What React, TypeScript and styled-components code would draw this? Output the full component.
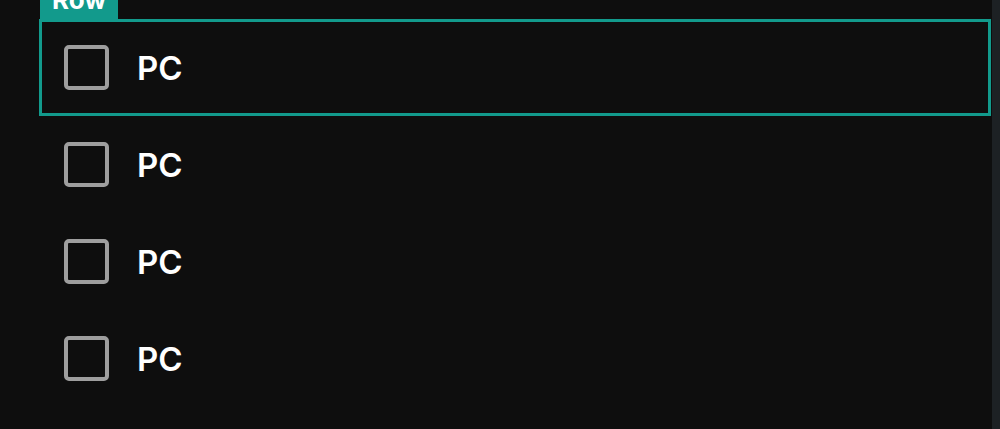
import styled, { createGlobalStyle } from 'styled-components';

const GlobalStyle = createGlobalStyle`
  html, body {
    margin: 0;
    padding: 0;
    background: #0e0e0e;
    overflow: hidden;
  }
`;

const Page = styled.div`
  display: flex;
  height: 429px;
  font-family: Inter, Roboto, 'Liberation Sans', sans-serif;
`;

const Main = styled.div`
  flex: 1;
  padding: 19px 1px 0 39px;
`;

const Track = styled.div`
  width: 8px;
  background: #1d2124;
`;

const List = styled.div`
  display: flex;
  flex-direction: column;
`;

const Row = styled.div<{ $selected?: boolean }>`
  position: relative;
  box-sizing: border-box;
  height: 97px;
  display: flex;
  align-items: center;
  gap: 28px;
  padding-left: 22px;
  border: 3px solid ${({ $selected }) => ($selected ? '#129a8c' : 'transparent')};
`;

const Tag = styled.div`
  position: absolute;
  left: -2px;
  bottom: 100%;
  box-sizing: border-box;
  width: 78px;
  height: 44px;
  padding: 0 0 9px 12px;
  display: flex;
  align-items: flex-end;
  background: #129a8c;
  color: #ffffff;
  font-size: 26px;
  line-height: 1;
  font-weight: 700;
`;

const Box = styled.div`
  box-sizing: border-box;
  width: 45px;
  height: 45px;
  border: 4px solid #9e9e9e;
  border-radius: 5px;
`;

const Label = styled.span`
  color: #ffffff;
  font-size: 33px;
  font-weight: 600;
`;

const items = ['PC', 'PC', 'PC', 'PC'];

export default function App() {
  return (
    <>
      <GlobalStyle />
      <Page>
        <Main>
          <List>
            {items.map((name, i) => (
              <Row key={i} $selected={i === 0}>
                {i === 0 && <Tag>Row</Tag>}
                <Box />
                <Label>{name}</Label>
              </Row>
            ))}
          </List>
        </Main>
        <Track />
      </Page>
    </>
  );
}
